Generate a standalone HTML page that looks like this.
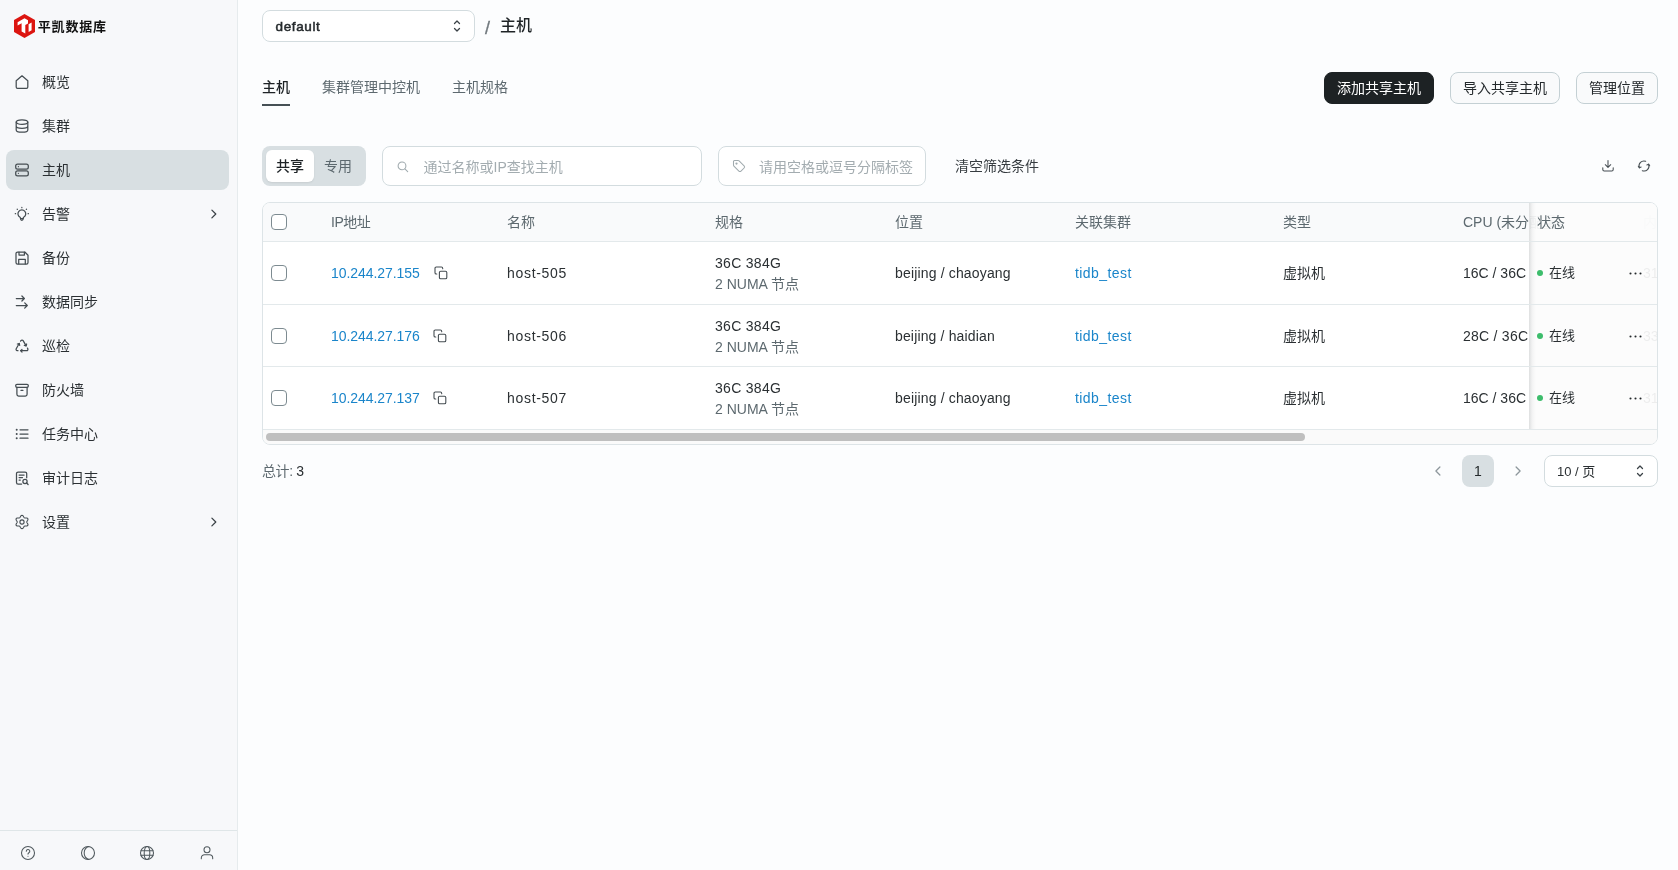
<!DOCTYPE html>
<html lang="zh-CN">
<head>
<meta charset="utf-8">
<title>主机</title>
<style>
*{box-sizing:border-box;margin:0;padding:0}
html,body{width:1678px;height:870px;overflow:hidden}
body{font-family:"Liberation Sans","Noto Sans CJK SC",sans-serif;font-size:14px;color:#24292c;background:#fcfdfe;position:relative;-webkit-font-smoothing:antialiased}
#app{position:absolute;left:0;top:0;width:1678px;height:870px;will-change:transform}
svg{display:block}
.ic{fill:none;stroke:currentColor;stroke-width:1.25;stroke-linecap:round;stroke-linejoin:round}

/* ---------- sidebar ---------- */
#side{position:absolute;left:0;top:0;width:238px;height:870px;background:#f7f8fa;border-right:1px solid #e6ebed}
#logo{position:absolute;left:13px;top:13px;width:110px;height:26px}
#logo svg{position:absolute;left:0;top:0}
#logo span{position:absolute;left:24.7px;top:4.6px;font-size:13px;line-height:18px;font-weight:700;color:#111;letter-spacing:.85px;white-space:nowrap}
.nav{position:absolute;left:6px;width:223px;height:40px;border-radius:8px;color:#2b3033}
.nav.on{background:#d8dfe2}
.nav svg.i{position:absolute;left:8px;top:12px;width:16px;height:16px;color:#454d52}
.nav span{position:absolute;left:36px;top:9px;line-height:22px;font-size:14px;white-space:nowrap}
.nav svg.ch{position:absolute;right:8px;top:13px;width:14px;height:14px;color:#3a4146}
#foot{position:absolute;left:0;top:830px;width:237px;height:40px;border-top:1px solid #dfe6e8}
#foot svg{position:absolute;top:14px;width:16px;height:16px;color:#4f585d;stroke-width:1.05}

/* ---------- main ---------- */
#sel{position:absolute;left:262px;top:10px;width:213px;height:32px;border:1px solid #d3dcdf;border-radius:8px;background:#fff}
#sel span{position:absolute;left:12.5px;top:6.8px;font-size:13.5px;line-height:17px;font-weight:400;letter-spacing:.62px;-webkit-text-stroke:.5px #24292c;color:#24292c}
#sel svg{position:absolute;left:187.9px;top:8.2px;width:12px;height:14px;color:#3a4146}
#slash{position:absolute;left:485px;top:16.5px;font-size:18px;line-height:22px;color:#70787d;-webkit-text-stroke:.3px #70787d}
#ttl{position:absolute;left:500px;top:15px;font-size:16px;line-height:22px;font-weight:500;color:#1e2326;white-space:nowrap}
.tab{position:absolute;top:76px;font-size:14px;line-height:22px;color:#5d696f;white-space:nowrap}
.tab.on{color:#1e2326;font-weight:500}
#tabline{position:absolute;left:262px;top:104px;width:28px;height:2px;background:#465055}
.btn{position:absolute;top:72px;height:32px;border-radius:8px;border:1px solid #c4d0d4;background:#f9fafb;font-size:14px;line-height:30px;text-align:center;color:#24292c;white-space:nowrap}
.btn.pri{background:#1d2224;border-color:#1d2224;color:#fff}

#seg{position:absolute;left:262px;top:146px;width:104px;height:40px;border-radius:8px;background:#d8dfe2}
#seg i{position:absolute;left:4px;top:4px;width:48px;height:32px;border-radius:6px;background:#fff;box-shadow:0 1px 2px rgba(0,0,0,.08)}
#seg span{position:absolute;top:9px;width:48px;text-align:center;line-height:22px;font-size:14px;font-style:normal}
.inp{position:absolute;top:146px;height:40px;border:1px solid #d3dcdf;border-radius:8px;background:#fff}
.inp svg{position:absolute;color:#a0aaae;stroke-width:1.05}
.inp span{position:absolute;top:9px;line-height:22px;font-size:14px;color:#a3acb0;white-space:nowrap}
#clr{position:absolute;left:955px;top:155px;line-height:22px;font-size:14px;color:#363c40;white-space:nowrap}
.tool{position:absolute;top:159px;width:14px;height:14px;color:#454d52;stroke-width:1.05}

/* ---------- table ---------- */
#tbl{position:absolute;left:262px;top:202px;width:1396px;height:243px;border:1px solid #dde4e7;border-radius:8px;background:#fff;overflow:hidden}
#thead{position:absolute;left:0;top:0;width:100%;height:39px;background:#f9fafb;border-bottom:1px solid #e3e9eb}
.row{position:absolute;left:0;width:100%;height:63px;border-bottom:1px solid #e3e9eb}
.c{position:absolute;white-space:nowrap;line-height:22px;font-size:14px}
.h{color:#5d696f;top:8px}
.v{top:20px;color:#2b3033}
.a{color:#1a85ca}
.cb{position:absolute;left:8px;width:16px;height:16px;border:1px solid #7d8b91;border-radius:4px;background:#fff}
.sp1{top:10px;color:#2b3033}
.sp2{top:31px;color:#5d696f}
.cp{position:absolute;width:14px;height:14px;color:#454d52;stroke-width:1.1}
#stick{position:absolute;left:1266px;top:0;width:129px;height:227px;background:rgba(252,252,252,.93)}
#stick:before{content:"";position:absolute;left:0;top:0;width:7px;height:100%;background:linear-gradient(to right,rgba(20,30,35,.13),rgba(20,30,35,.04) 45%,rgba(20,30,35,0))}
#stick .hd{position:absolute;left:0;top:0;width:100%;height:39px;border-bottom:1px solid #e3e9eb}
#stick .r{position:absolute;left:0;width:100%;height:63px;border-bottom:1px solid #e3e9eb}
.dot{position:absolute;left:8px;top:27.5px;width:6px;height:6px;border-radius:50%;background:#3dbd6c}
.st{position:absolute;left:20px;top:20px;font-size:13px;line-height:22px;color:#2b3033}
.more{position:absolute;left:100px;top:29.5px;width:13px;height:3px}
#sbar{position:absolute;left:0;top:227px;width:100%;height:14px;background:#fafafa}
#sbar i{position:absolute;left:3px;top:3.2px;width:1039px;height:8px;border-radius:4px;background:#bfbfbf}

#total{position:absolute;left:262px;top:460px;line-height:22px;font-size:14px;color:#5d696f;white-space:nowrap;letter-spacing:-.4px}
#total b{font-weight:400;color:#2b3033}
.pg{position:absolute;top:455px;width:32px;height:32px;border-radius:8px}
.pg svg{position:absolute;left:10px;top:10px;width:12px;height:12px;color:#8d979c}
#pg1{background:#d8dfe2;text-align:center;line-height:32px;font-size:14px;color:#24292c}
#psz{position:absolute;left:1544px;top:455px;width:114px;height:32px;border:1px solid #d3dcdf;border-radius:8px;background:#fff}
#psz span{position:absolute;left:12px;top:5px;line-height:22px;font-size:13px;color:#2b3033;white-space:nowrap}
#psz svg{position:absolute;left:89.3px;top:8.3px;width:12px;height:14px;color:#3a4146}
</style>
</head>
<body>
<div id="app">

<!-- SIDEBAR -->
<div id="side">
  <div id="logo">
    <svg width="23" height="26" viewBox="0 0 23 26"><polygon points="11.5,1 22,7 22,19 11.5,25 1,19 1,7" fill="#dc1510"/><polygon points="4.6,9.3 11.5,5.3 15,7.3 15,10.6 12.3,12.1 12.3,20.6 8.6,18.6 8.6,10.3 4.6,12.6" fill="#fff"/><polygon points="15.6,11.3 18.6,9.6 18.6,17.3 15.6,19" fill="#fff"/></svg>
    <span>平凯数据库</span>
  </div>
  <div class="nav" style="top:62px"><svg class="i ic" viewBox="0 0 16 16"><path d="M2.2 6.7 8 1.8l5.800 4.900V13a1.300 1.300 0 0 1-1.300 1.300h-9A1.300 1.300 0 0 1 2.200 13z"/></svg><span>概览</span></div>
  <div class="nav" style="top:106px"><svg class="i ic" viewBox="0 0 16 16"><ellipse cx="8" cy="4.1" rx="5.8" ry="2.3"/><path d="M2.200 4.100v7.800c0 1.300 2.600 2.300 5.800 2.300s5.800-1 5.800-2.300V4.100M2.200 8c0 1.300 2.600 2.300 5.800 2.300s5.800-1 5.800-2.300"/></svg><span>集群</span></div>
  <div class="nav on" style="top:150px"><svg class="i ic" viewBox="0 0 16 16"><rect x="1.700" y="2.200" width="12.600" height="5" rx="1.900"/><rect x="1.700" y="8.800" width="12.600" height="5" rx="1.900"/><path d="M4.400 4.700h.01M4.400 11.300h.01"/></svg><span>主机</span></div>
  <div class="nav" style="top:194px"><svg class="i ic" viewBox="0 0 16 16"><g transform="translate(-.15 .7)"><path d="M6.200 10.600a3.900 3.900 0 1 1 3.600 0c-.4.400-.6.900-.6 1.500v.300a1.200 1.200 0 0 1-2.400 0v-.300c0-.600-.2-1.100-.6-1.500z"/><path d="M6.600 11.800h2.800"/></g><path d="M7.850 1.400v.300M3.200 3.200l.2.200M12.500 3.200l-.2.200M1.300 7.700h.3M14.100 7.700h.3"/></svg><span>告警</span><svg class="ch ic" viewBox="0 0 14 14"><path d="M4.900 3.100 8.800 7 4.900 10.900"/></svg></div>
  <div class="nav" style="top:238px"><svg class="i ic" viewBox="0 0 16 16"><path d="M3.600 2h7.200L14 5.200v7.200a1.600 1.600 0 0 1-1.600 1.600H3.600A1.600 1.600 0 0 1 2 12.400V3.600A1.600 1.600 0 0 1 3.600 2z"/><path d="M5 2.200v2.900h5.400V2.200M4.700 13.800V9.300h6.600v4.500"/></svg><span>备份</span></div>
  <div class="nav" style="top:282px"><svg class="i ic" viewBox="0 0 16 16"><path d="M2.300 4.500h8.100M7.900 2l2.500 2.500L7.900 7M2.300 11.500h11M10.700 8.900l2.600 2.600-2.600 2.600"/></svg><span>数据同步</span></div>
  <div class="nav" style="top:326px"><svg class="i ic" viewBox="0 0 16 16"><g transform="scale(.6667)" stroke-width="1.875"><path d="M12 17l-2 2l2 2"/><path d="M10 19h9a2 2 0 0 0 1.750 -2.750l-.55 -1"/><path d="M8.536 11l-.732 -2.732l-2.732 .732"/><path d="M7.804 8.268l-4.500 7.794a2 2 0 0 0 1.506 2.890l1.141 .024"/><path d="M15.464 11l2.732 .732l.732 -2.732"/><path d="M18.196 11.732l-4.500 -7.794a2 2 0 0 0 -3.256 -.140l-.591 .976"/></g></svg><span>巡检</span></div>
  <div class="nav" style="top:370px"><svg class="i ic" viewBox="0 0 16 16"><rect x="1.700" y="2.300" width="12.600" height="3" rx="1.300"/><path d="M2.900 5.400v6.900a1.700 1.700 0 0 0 1.700 1.700h6.800a1.700 1.700 0 0 0 1.700-1.700V5.400M7 8.400h1.900"/></svg><span>防火墙</span></div>
  <div class="nav" style="top:414px"><svg class="i ic" viewBox="0 0 16 16"><path d="M6 3.800h8M6 8h8M6 12.200h8"/><path stroke-width="2" d="M2.700 3.800h.01M2.700 8h.01M2.700 12.200h.01"/></svg><span>任务中心</span></div>
  <div class="nav" style="top:458px"><svg class="i ic" viewBox="0 0 16 16"><path d="M7.600 14H4.100a1.600 1.600 0 0 1-1.600-1.600V3.600A1.600 1.600 0 0 1 4.100 2h7a1.600 1.600 0 0 1 1.600 1.600v4.200"/><path d="M5.100 5h5M5.100 7.500h3.400M5.100 10h1.200"/><circle cx="11" cy="11.400" r="2.100"/><path d="M12.600 13l1.500 1.500"/></svg><span>审计日志</span></div>
  <div class="nav" style="top:502px"><svg class="i ic" viewBox="0 0 16 16" style="stroke-width:1.1"><path d="M8.00 1.30L8.57 1.45L9.08 1.87L9.49 2.45L9.80 3.04L10.08 3.53L10.40 3.84L10.83 3.96L11.39 3.96L12.07 3.93L12.77 4.00L13.38 4.23L13.80 4.65L13.96 5.22L13.85 5.87L13.55 6.51L13.19 7.08L12.91 7.57L12.80 8.00L12.91 8.43L13.19 8.92L13.55 9.49L13.85 10.13L13.96 10.78L13.80 11.35L13.38 11.77L12.77 12.00L12.07 12.07L11.39 12.04L10.83 12.04L10.40 12.16L10.08 12.47L9.80 12.96L9.49 13.55L9.08 14.13L8.57 14.55L8.00 14.70L7.43 14.55L6.92 14.13L6.51 13.55L6.20 12.96L5.92 12.47L5.60 12.16L5.17 12.04L4.61 12.04L3.93 12.07L3.23 12.00L2.62 11.77L2.20 11.35L2.04 10.78L2.15 10.13L2.45 9.49L2.81 8.92L3.09 8.43L3.20 8.00L3.09 7.57L2.81 7.08L2.45 6.51L2.15 5.87L2.04 5.22L2.20 4.65L2.62 4.23L3.23 4.00L3.93 3.93L4.61 3.96L5.17 3.96L5.60 3.84L5.92 3.53L6.20 3.04L6.51 2.45L6.92 1.87L7.43 1.45Z"/><circle cx="8" cy="8" r="2.100"/></svg><span>设置</span><svg class="ch ic" viewBox="0 0 14 14"><path d="M4.900 3.100 8.800 7 4.900 10.900"/></svg></div>
  <div id="foot"><svg class="ic" style="left:20px" viewBox="0 0 16 16"><circle cx="8" cy="8" r="6.500"/><path d="M6.300 6.300a1.750 1.750 0 1 1 2.600 1.500c-.6.350-.9.700-.9 1.300M8 11.300h.01"/></svg>
<svg class="ic" style="left:80px" viewBox="0 0 16 16"><circle cx="8" cy="8" r="6.500"/><path d="M8.900 1.600a6.700 6.700 0 0 0 0 12.800"/></svg>
<svg class="ic" style="left:139px" viewBox="0 0 16 16"><circle cx="8" cy="8" r="6.500"/><ellipse cx="8" cy="8" rx="2.800" ry="6.500"/><path d="M2 5.700h12M2 10.300h12"/></svg>
<svg class="ic" style="left:199px" viewBox="0 0 16 16"><circle cx="8" cy="4.700" r="3"/><path d="M2.300 13.800v-.8a3.200 3.200 0 0 1 3.200-3.200h5a3.200 3.200 0 0 1 3.200 3.200v.8"/></svg></div>
</div>

<!-- HEADER -->
<div id="sel"><span>default</span><svg class="ic" viewBox="0 0 12 14"><path d="M3.500 4.500 6 2l2.500 2.500M3.500 9.500 6 12l2.500-2.500"/></svg></div>
<div id="slash">/</div>
<div id="ttl">主机</div>

<div class="tab on" style="left:262px">主机</div>
<div class="tab" style="left:322px">集群管理中控机</div>
<div class="tab" style="left:452px">主机规格</div>
<div id="tabline"></div>

<div class="btn pri" style="left:1324px;width:110px">添加共享主机</div>
<div class="btn" style="left:1450px;width:110px">导入共享主机</div>
<div class="btn" style="left:1576px;width:82px">管理位置</div>

<!-- FILTERS -->
<div id="seg"><i></i><span style="left:4px;color:#1e2326;font-weight:500">共享</span><span style="left:52px;color:#5d696f">专用</span></div>
<div class="inp" style="left:382px;width:320px"><svg class="ic" style="left:13px;top:13px;width:14px;height:14px" viewBox="0 0 14 14"><circle cx="6" cy="5.900" r="3.900"/><path d="M8.900 8.800l2.800 2.800"/></svg><span style="left:40.600px">通过名称或IP查找主机</span></div>
<div class="inp" style="left:718px;width:208px"><svg class="ic" style="left:12.2px;top:11.3px;width:16px;height:16px" viewBox="0 0 16 16"><path d="M2.5 3.5v3.6c0 .4.2.8.4 1l5 5c.6.6 1.500.6 2.100 0l3.100-3.100c.6-.6.6-1.500 0-2.100l-5-5c-.3-.3-.6-.4-1-.4H3.500c-.6 0-1 .4-1 1z"/><circle cx="5.500" cy="5.500" r=".6"/></svg><span style="left:40px">请用空格或逗号分隔标签</span></div>
<div id="clr">清空筛选条件</div>
<svg class="tool ic" style="left:1601px" viewBox="0 0 14 14"><path d="M7 1.400v6.900M4.300 5.700 7 8.400l2.700-2.700M1.800 8.700v1.900a1.400 1.400 0 0 0 1.400 1.400h7.600a1.400 1.400 0 0 0 1.400-1.400V8.700"/></svg>
<svg class="tool ic" style="left:1637px" viewBox="0 0 14 14"><path d="M2.400 8.680A4.900 4.900 0 0 1 8.680 2.300M11.600 5.320A4.900 4.900 0 0 1 5.320 11.700"/><path d="M1.300 7.300 2.400 8.900 4.100 8M12.700 6.700 11.600 5.100 9.900 6"/></svg>

<!-- TABLE -->
<div id="tbl">
  <div id="thead">
    <div class="cb" style="top:11px"></div>
    <div class="c h" style="left:68px;letter-spacing:-0.5px">IP地址</div>
    <div class="c h" style="left:244px">名称</div>
    <div class="c h" style="left:452px">规格</div>
    <div class="c h" style="left:632px">位置</div>
    <div class="c h" style="left:812px">关联集群</div>
    <div class="c h" style="left:1020px">类型</div>
    <div class="c h" style="left:1200px">CPU (未分配量)</div>
    <div class="c h" style="left:1380px;color:#c9cfd2">内存</div>
  </div>
  <div class="row" style="top:39px">
    <div class="cb" style="top:23px"></div>
    <div class="c v a" style="left:68px;letter-spacing:-0.07px">10.244.27.155</div><svg class="cp ic" style="left:171px;top:24px" viewBox="0 0 14 14"><rect x="5.400" y="5.300" width="7.400" height="7.500" rx="1.300"/><path d="M8.700 2.800V2.300A1.300 1.300 0 0 0 7.400 1H2.300A1.300 1.300 0 0 0 1 2.300v4.400A1.300 1.300 0 0 0 2.300 8h.5"/></svg>
    <div class="c v" style="left:244px;letter-spacing:0.7px">host-505</div>
    <div class="c sp1" style="left:452px;letter-spacing:0.29px">36C 384G</div><div class="c sp2" style="left:452px">2 NUMA 节点</div>
    <div class="c v" style="left:632px;letter-spacing:0.16px">beijing / chaoyang</div>
    <div class="c v a" style="left:812px;letter-spacing:0.42px">tidb_test</div>
    <div class="c v" style="left:1020px">虚拟机</div>
    <div class="c v" style="left:1200px">16C / 36C</div>
    <div class="c v" style="left:1380px">31</div>
  </div>
  <div class="row" style="top:102px;height:62px;margin-top:0">
    <div class="cb" style="top:23px"></div>
    <div class="c v a" style="left:68px;letter-spacing:-0.07px">10.244.27.176</div><svg class="cp ic" style="left:170px;top:24px" viewBox="0 0 14 14"><rect x="5.400" y="5.300" width="7.400" height="7.500" rx="1.300"/><path d="M8.700 2.800V2.300A1.300 1.300 0 0 0 7.400 1H2.300A1.300 1.300 0 0 0 1 2.300v4.400A1.300 1.300 0 0 0 2.300 8h.5"/></svg>
    <div class="c v" style="left:244px;letter-spacing:0.7px">host-506</div>
    <div class="c sp1" style="left:452px;letter-spacing:0.29px">36C 384G</div><div class="c sp2" style="left:452px">2 NUMA 节点</div>
    <div class="c v" style="left:632px;letter-spacing:0.15px">beijing / haidian</div>
    <div class="c v a" style="left:812px;letter-spacing:0.42px">tidb_test</div>
    <div class="c v" style="left:1020px">虚拟机</div>
    <div class="c v" style="left:1200px;letter-spacing:0.25px">28C / 36C</div>
    <div class="c v" style="left:1380px">33</div>
  </div>
  <div class="row" style="top:164px">
    <div class="cb" style="top:23px"></div>
    <div class="c v a" style="left:68px;letter-spacing:-0.07px">10.244.27.137</div><svg class="cp ic" style="left:170px;top:24px" viewBox="0 0 14 14"><rect x="5.400" y="5.300" width="7.400" height="7.500" rx="1.300"/><path d="M8.700 2.800V2.300A1.300 1.300 0 0 0 7.400 1H2.300A1.300 1.300 0 0 0 1 2.300v4.400A1.300 1.300 0 0 0 2.300 8h.5"/></svg>
    <div class="c v" style="left:244px;letter-spacing:0.7px">host-507</div>
    <div class="c sp1" style="left:452px;letter-spacing:0.29px">36C 384G</div><div class="c sp2" style="left:452px">2 NUMA 节点</div>
    <div class="c v" style="left:632px;letter-spacing:0.16px">beijing / chaoyang</div>
    <div class="c v a" style="left:812px;letter-spacing:0.42px">tidb_test</div>
    <div class="c v" style="left:1020px">虚拟机</div>
    <div class="c v" style="left:1200px">16C / 36C</div>
    <div class="c v" style="left:1380px">31</div>
  </div>
  <div id="stick">
    <div class="hd"><div class="c h" style="left:8px">状态</div></div>
    <div class="r" style="top:39px"><div class="dot"></div><div class="st">在线</div><svg class="more" viewBox="0 0 13 3"><circle cx="1.500" cy="1.500" r="1.050" fill="#24292c"/><circle cx="6.500" cy="1.500" r="1.050" fill="#24292c"/><circle cx="11.500" cy="1.500" r="1.050" fill="#24292c"/></svg></div>
    <div class="r" style="top:102px;height:62px;margin-top:0"><div class="dot"></div><div class="st">在线</div><svg class="more" viewBox="0 0 13 3"><circle cx="1.500" cy="1.500" r="1.050" fill="#24292c"/><circle cx="6.500" cy="1.500" r="1.050" fill="#24292c"/><circle cx="11.500" cy="1.500" r="1.050" fill="#24292c"/></svg></div>
    <div class="r" style="top:164px"><div class="dot"></div><div class="st">在线</div><svg class="more" viewBox="0 0 13 3"><circle cx="1.500" cy="1.500" r="1.050" fill="#24292c"/><circle cx="6.500" cy="1.500" r="1.050" fill="#24292c"/><circle cx="11.500" cy="1.500" r="1.050" fill="#24292c"/></svg></div>
  </div>
  <div id="sbar"><i></i></div>
</div>

<div id="total">总计: <b>3</b></div>
<div class="pg" style="left:1422px"><svg class="ic" viewBox="0 0 12 12"><path d="M7.900 2 3.900 6l4 4"/></svg></div>
<div class="pg" id="pg1" style="left:1462px">1</div>
<div class="pg" style="left:1502px"><svg class="ic" viewBox="0 0 12 12"><path d="M4.100 2 8.100 6l-4 4"/></svg></div>
<div id="psz"><span>10 / 页</span><svg class="ic" viewBox="0 0 12 14"><path d="M3.500 4.500 6 2l2.500 2.500M3.500 9.500 6 12l2.500-2.500"/></svg></div>

</div>
</body>
</html>
